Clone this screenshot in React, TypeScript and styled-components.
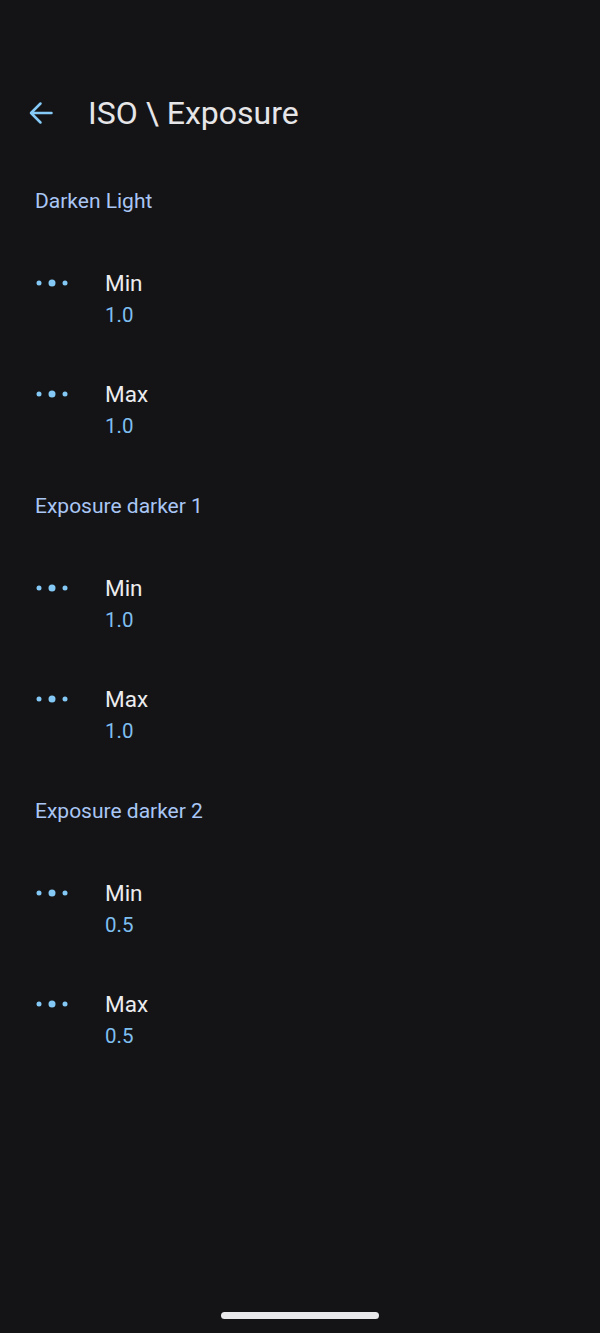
import React from "react";
import styled, { createGlobalStyle } from "styled-components";

const GlobalStyle = createGlobalStyle`
  html, body {
    margin: 0;
    padding: 0;
    background: #141416;
  }
  body {
    font-family: Roboto, "Noto Sans", sans-serif;
  }
`;

const Screen = styled.div`
  width: 600px;
  height: 1333px;
  background: #141416;
  display: flex;
  flex-direction: column;
  overflow: hidden;
`;

const TopBar = styled.div`
  height: 56px;
  margin-top: 85px;
  margin-bottom: 17px;
  display: flex;
  align-items: center;
  padding-left: 27px;
  gap: 33px;
`;

const BackButton = styled.div`
  width: 28px;
  height: 28px;
  display: flex;
  align-items: center;
  justify-content: center;
`;

const Title = styled.h1`
  margin: 0;
  font-size: 32px;
  font-weight: 400;
  color: #e6e6e8;
  letter-spacing: 0;
`;

const Section = styled.div`
  display: flex;
  flex-direction: column;
  padding-top: 31px;
`;

const SectionTitle = styled.div`
  height: 24px;
  line-height: 24px;
  padding-left: 35px;
  margin-bottom: 28px;
  font-size: 21px;
  color: #a9c6f5;
`;

const Item = styled.div`
  display: flex;
  padding: 28px 0 25px 35px;
  gap: 36px;
`;

const DotsIcon = styled.div`
  width: 34px;
  height: 28px;
  display: flex;
  align-items: center;
`;

const ItemText = styled.div`
  display: flex;
  flex-direction: column;
  gap: 6px;
`;

const ItemLabel = styled.div`
  height: 28px;
  line-height: 28px;
  font-size: 22.5px;
  color: #ececee;
`;

const ItemValue = styled.div`
  height: 24px;
  line-height: 24px;
  font-size: 20.5px;
  color: #7fbff0;
`;

const Spacer = styled.div`
  flex: 1;
`;

const HomeBar = styled.div`
  width: 158px;
  height: 7px;
  border-radius: 4px;
  background: #e9e9eb;
  align-self: center;
  margin-bottom: 14px;
`;

const sections = [
  { title: "Darken Light", min: "1.0", max: "1.0" },
  { title: "Exposure darker 1", min: "1.0", max: "1.0" },
  { title: "Exposure darker 2", min: "0.5", max: "0.5" },
];

function Dots() {
  return (
    <svg width="34" height="10" viewBox="0 0 34 10">
      <circle cx="4" cy="5" r="2.5" fill="#84c8f6" />
      <circle cx="17" cy="5" r="3.5" fill="#84c8f6" />
      <circle cx="30" cy="5" r="2.5" fill="#84c8f6" />
    </svg>
  );
}

function Setting({ label, value }: { label: string; value: string }) {
  return (
    <Item>
      <DotsIcon>
        <Dots />
      </DotsIcon>
      <ItemText>
        <ItemLabel>{label}</ItemLabel>
        <ItemValue>{value}</ItemValue>
      </ItemText>
    </Item>
  );
}

export default function App() {
  return (
    <Screen>
      <GlobalStyle />
      <TopBar>
        <BackButton>
          <svg width="28" height="28" viewBox="0 0 28 28" fill="none">
            <path
              d="M24.5 14H4M13.5 4.5L4 14l9.5 9.5"
              stroke="#86caf7"
              strokeWidth="2.5"
              strokeLinecap="round"
              strokeLinejoin="round"
            />
          </svg>
        </BackButton>
        <Title>ISO \ Exposure</Title>
      </TopBar>
      {sections.map((s) => (
        <Section key={s.title}>
          <SectionTitle>{s.title}</SectionTitle>
          <Setting label="Min" value={s.min} />
          <Setting label="Max" value={s.max} />
        </Section>
      ))}
      <Spacer />
      <HomeBar />
    </Screen>
  );
}
